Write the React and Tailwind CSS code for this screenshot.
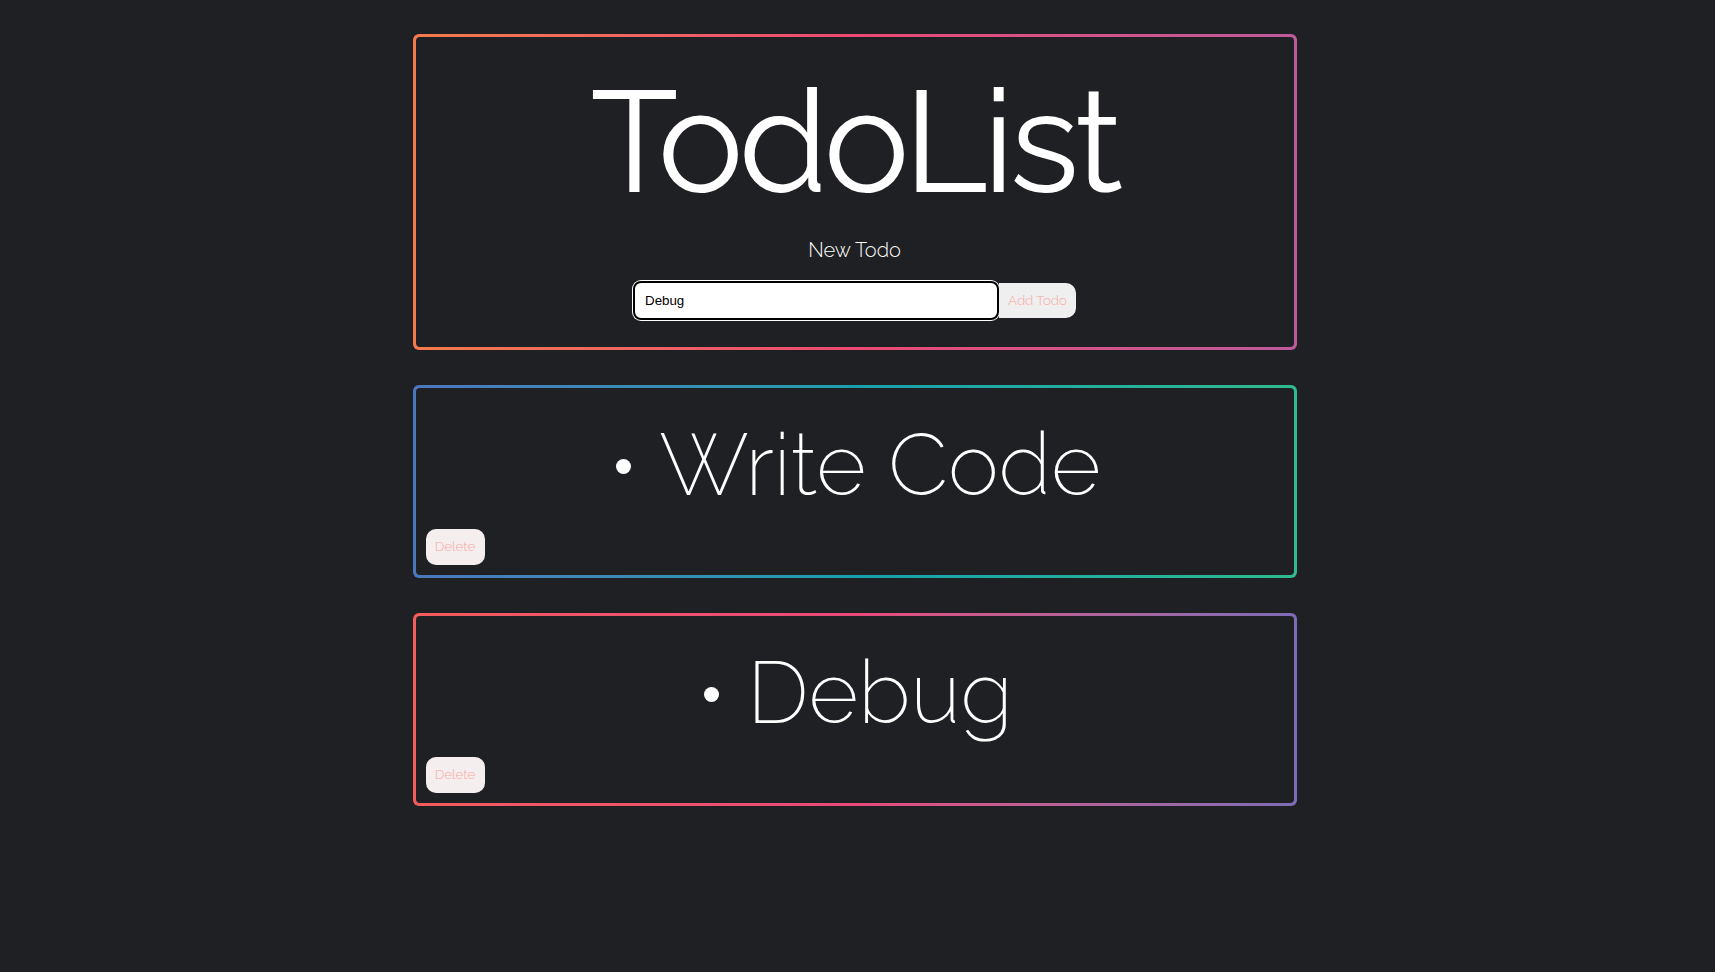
import React from "react";

const display = { fontFamily: '"Raleway", "Lato", "Inter", sans-serif' };

function TodoItem({ text, gradient }) {
  return (
    <div className={`w-[884px] rounded-[6px] p-[3px] ${gradient}`}>
      <div className="rounded-[4px] bg-[#1f2023] flex flex-col pt-[34px] pb-[10px] px-[10px]">
        <div className="flex items-center justify-center h-[86px] pl-[8px]" style={display}>
          <span className="w-[15px] h-[15px] rounded-full bg-white mr-[28px] mt-[3px]"></span>
          <span className="text-[86px] leading-[86px] font-extralight text-white">{text}</span>
        </div>
        <div className="mt-[21px]">
          <button
            className="w-[59px] h-[36px] rounded-[10px] bg-[#f5eeee] text-[13.33px] font-light text-[#f5aaa2]"
            style={display}
          >
            Delete
          </button>
        </div>
      </div>
    </div>
  );
}

export default function App() {
  return (
    <div className="min-h-screen w-full bg-[#1f2023] flex flex-col items-center pt-[34px] pr-[6px] gap-[35px]">
      <div className="w-[884px] rounded-[6px] p-[3px] bg-linear-to-r from-[#f47b49] via-[#ec4873] to-[#bd5a9b]">
        <div className="rounded-[4px] bg-[#1f2023] flex flex-col items-center pt-[33px] pb-[27px]">
          <h1 className="text-[144px] leading-[144px] font-normal tracking-[-4.6px] text-white" style={display}>
            TodoList
          </h1>
          <p className="mt-[24px] text-[20px] leading-[24px] font-light text-white" style={display}>
            New Todo
          </p>
          <div className="mt-[19px] flex items-center">
            <input
              defaultValue="Debug"
              className="w-[366px] h-[39px] bg-white border-2 border-black rounded-[8px] ring-1 ring-white px-[10px] text-[13.33px] text-black outline-none"
              style={{ fontFamily: '"Liberation Sans", Arial, sans-serif' }}
            />
            <button
              className="w-[77px] h-[35px] bg-[#efefef] rounded-r-[10px] text-[13.33px] font-light text-[#f7a9a0]"
              style={display}
            >
              Add Todo
            </button>
          </div>
        </div>
      </div>
      <TodoItem
        text="Write Code"
        gradient="bg-linear-to-r from-[#4b77bd] via-[#19a0ad] to-[#2fbb8d]"
      />
      <TodoItem
        text="Debug"
        gradient="bg-linear-to-r from-[#f55c5c] via-[#e9497a] to-[#7b6cb6]"
      />
    </div>
  );
}
